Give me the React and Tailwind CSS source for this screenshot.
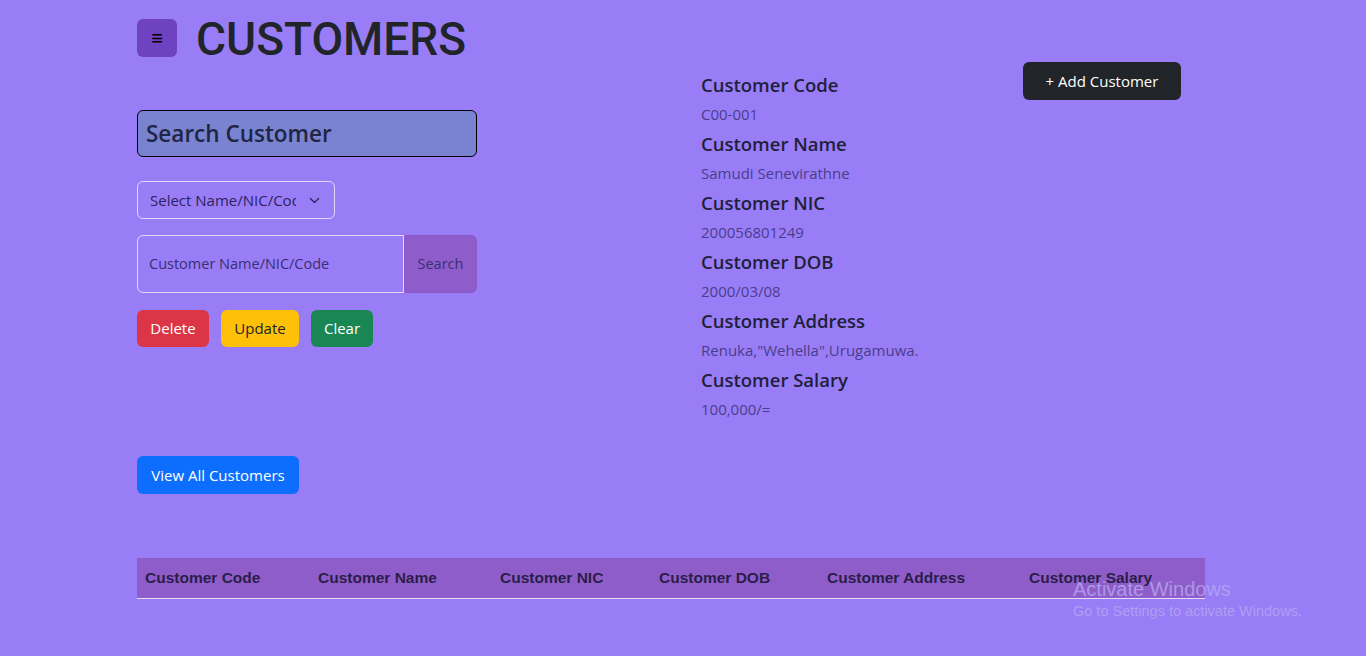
import React, { useState } from 'react'

const details = [
  { label: 'Customer Code', value: 'C00-001' },
  { label: 'Customer Name', value: 'Samudi Senevirathne' },
  { label: 'Customer NIC', value: '200056801249' },
  { label: 'Customer DOB', value: '2000/03/08' },
  { label: 'Customer Address', value: 'Renuka,"Wehella",Urugamuwa.' },
  { label: 'Customer Salary', value: '100,000/=' },
]

const columns = [
  { title: 'Customer Code', w: 'w-[173px]' },
  { title: 'Customer Name', w: 'w-[182px]' },
  { title: 'Customer NIC', w: 'w-[159px]' },
  { title: 'Customer DOB', w: 'w-[168px]' },
  { title: 'Customer Address', w: 'w-[202px]' },
  { title: 'Customer Salary', w: 'flex-1' },
]

const font = "font-['Segoe_UI','Open_Sans',Arial,sans-serif]"

export default function App() {
  const [query, setQuery] = useState('')

  return (
    <div className={`relative min-h-[656px] w-full bg-[#987df7] pt-[19px] ${font} text-[#212529]`}>
      <div className="ml-[137px] w-[1068px]">
        {/* Header */}
        <div className="flex h-[38px] items-start gap-[19px]">
          <button className="flex h-[38px] w-[40px] items-center justify-center rounded-md bg-[#6f42c1] text-[20px] leading-none text-black">
            ≡
          </button>
          <h1 className="font-['Roboto',sans-serif] text-[46px] font-medium leading-[40px] text-[#212529]">
            CUSTOMERS
          </h1>
        </div>

        {/* Form + details */}
        <div className="flex">
          <div className="w-[340px] pt-[53px]">
            <div className="flex h-[47px] items-center rounded-md border border-black bg-[#7a83cf] px-[8px] text-[22.5px] font-semibold text-[#1f2545]">
              Search Customer
            </div>

            <div className="mt-[24px] flex h-[38px] w-[198px] items-center justify-between rounded-md border border-white/70 pl-[12px] pr-[14px] text-[15px] text-[#2b2460]">
              <span className="w-[146px] overflow-hidden whitespace-nowrap">Select Name/NIC/Code</span>
              <svg width="11" height="11" viewBox="0 0 16 16" fill="none" stroke="#2b2460" strokeWidth="1.8" strokeLinecap="round" strokeLinejoin="round">
                <path d="M2 5l6 6 6-6" />
              </svg>
            </div>

            <div className="mt-[16px] flex h-[58px]">
              <input
                value={query}
                onChange={(e) => setQuery(e.target.value)}
                placeholder="Customer Name/NIC/Code"
                className="w-[267px] rounded-l-md border border-white/70 bg-transparent px-[11px] text-[14.5px] text-[#2b2460] outline-none placeholder:text-[#3a2f72]"
              />
              <button className="flex-1 rounded-r-md border border-[#8a5ac4] bg-[#8e5ccb] text-[14.5px] text-[#3a2f72]">
                Search
              </button>
            </div>

            <div className="mt-[17px] flex gap-[12px]">
              <button className="h-[37px] w-[72px] rounded-md bg-[#dc3545] text-[15px] text-white">Delete</button>
              <button className="h-[37px] w-[78px] rounded-md bg-[#ffc107] text-[15px] text-[#212529]">Update</button>
              <button className="h-[37px] w-[62px] rounded-md bg-[#198754] text-[15px] text-white">Clear</button>
            </div>

            <button className="mt-[109px] h-[38px] w-[162px] rounded-md bg-[#0d6efd] text-[15px] text-white">
              View All Customers
            </button>
          </div>

          <div className="ml-[224px] flex flex-1">
            <div className="flex flex-col pt-[16px]">
              {details.map((d) => (
                <div key={d.label} className="pb-[7px]">
                  <div className="h-[24px] text-[18.5px] font-semibold leading-[24px] text-[#1f1f3a]">{d.label}</div>
                  <div className="mt-[6px] h-[22px] text-[15px] leading-[22px] text-[#4a3d8c]">{d.value}</div>
                </div>
              ))}
            </div>
            <button className="ml-auto mr-[24px] mt-[5px] h-[38px] w-[158px] rounded-md bg-[#212529] text-[15px] text-white">
              + Add Customer
            </button>
          </div>
        </div>

        {/* Table */}
        <div className="mt-[64px] flex h-[41px] items-center border-b border-[#e6dcff] bg-[#8f5dc9] pl-[8px] font-['Liberation_Sans',Arial,sans-serif] text-[15.5px] font-bold text-[#2a1d4a]">
          {columns.map((c) => (
            <div key={c.title} className={c.w}>{c.title}</div>
          ))}
        </div>
      </div>

      {/* Windows watermark */}
      <div className="pointer-events-none absolute left-[1073px] top-[576px] font-['Liberation_Sans',Arial,sans-serif] text-[#b7a8f0]/80">
        <div className="text-[20px] leading-[26px]">Activate Windows</div>
        <div className="text-[14.5px] leading-[18px]">Go to Settings to activate Windows.</div>
      </div>
    </div>
  )
}
